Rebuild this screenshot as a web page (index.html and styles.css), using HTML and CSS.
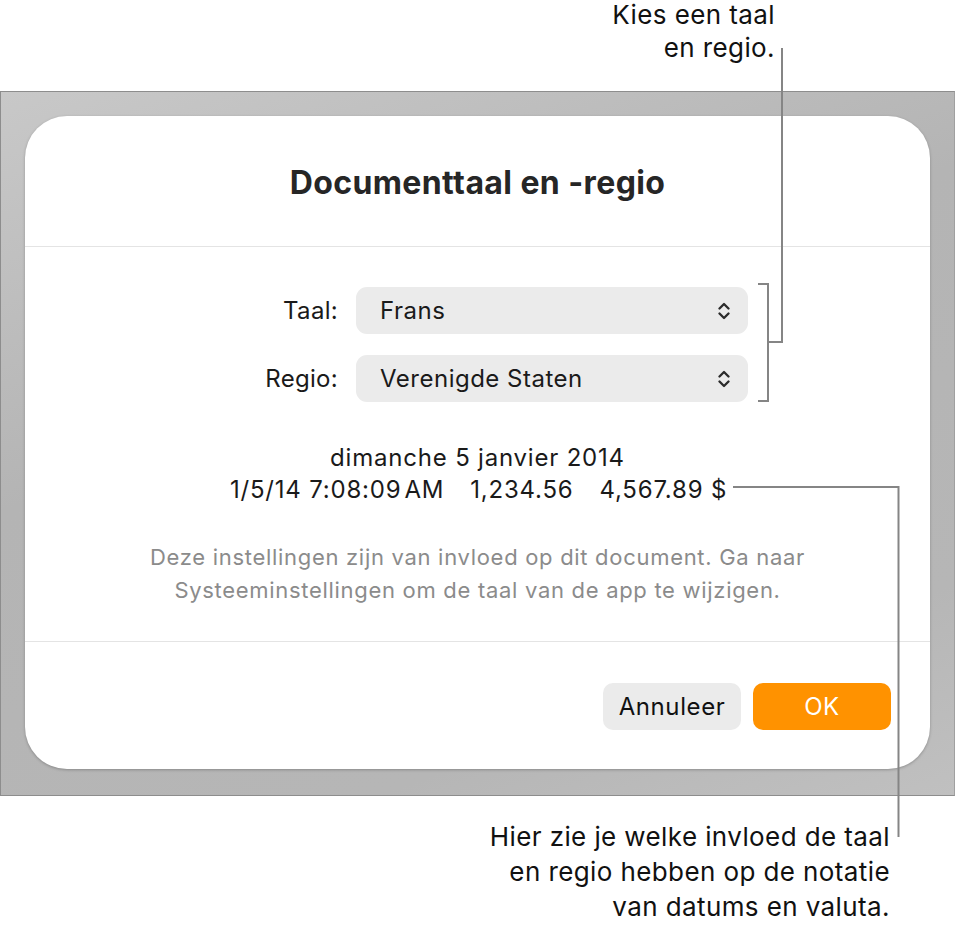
FILE: index.html
```html
<!DOCTYPE html>
<html lang="nl">

<head>
    <meta charset="UTF-8">
    <meta name="viewport" content="width=device-width, initial-scale=1.0">
    <title>Documenttaal en -regio</title>
    <link rel="stylesheet" href="styles.css">
</head>

<body>
    <div class="page">
        <p class="note note-top">Kies een taal<br>en regio.</p>

        <div class="backdrop">
            <div class="dialog">
                <div class="dialog-head">
                    <h1>Documenttaal en -regio</h1>
                </div>

                <div class="dialog-body">
                    <div class="fields">
                        <label class="field-label">Taal:</label>
                        <div class="popup">
                            <span>Frans</span>
                            <svg class="chev" viewBox="0 0 12 20" width="12" height="20">
                                <path d="M1.5 7.5 L6 3 L10.5 7.5 M1.5 12.5 L6 17 L10.5 12.5" />
                            </svg>
                        </div>
                        <label class="field-label">Regio:</label>
                        <div class="popup">
                            <span>Verenigde Staten</span>
                            <svg class="chev" viewBox="0 0 12 20" width="12" height="20">
                                <path d="M1.5 7.5 L6 3 L10.5 7.5 M1.5 12.5 L6 17 L10.5 12.5" />
                            </svg>
                        </div>
                    </div>

                    <div class="sample">
                        <div>dimanche 5 janvier 2014</div>
                        <div class="sample-row">
                            <span>1/5/14 7:08:09&#8202;AM</span>
                            <span>1,234.56</span>
                            <span>4,567.89 $</span>
                        </div>
                    </div>

                    <p class="hint">Deze instellingen zijn van invloed op dit document. Ga naar<br>Systeeminstellingen om de taal van de app te wijzigen.</p>
                </div>

                <div class="dialog-foot">
                    <button class="btn">Annuleer</button>
                    <button class="btn btn-ok">OK</button>
                </div>
            </div>
        </div>

        <p class="note note-bottom">Hier zie je welke invloed de taal<br>en regio hebben op de notatie<br>van datums en valuta.</p>

        <!-- leader lines for the callouts -->
        <svg class="leaders" width="955" height="928" viewBox="0 0 955 928">
            <path d="M758 286 H768 V403 H758 M768 344 H782 V50" />
            <path d="M733 489 H898.5 V839" />
        </svg>
    </div>
</body>

</html>
```

FILE: styles.css
```css
* {
    padding: 0;
    margin: 0;
    box-sizing: border-box;
}

body {
    background: #fff;
    font-family: Inter, "Noto Sans", "Liberation Sans", sans-serif;
    color: #1d1d1f;
}

.page {
    position: relative;
    width: 955px;
    height: 928px;
}

.note {
    font-size: 26px;
    line-height: 33px;
    letter-spacing: 0.4px;
    text-align: right;
    color: #111;
}

.note-top {
    height: 93px;
    margin-top: -2px;
    padding-right: 180px;
}

.note-bottom {
    margin-top: 23px;
    line-height: 35px;
    padding-right: 65px;
}

.backdrop {
    width: 955px;
    height: 705px;
    padding: 24px;
    border: 1px solid #8d8d8d;
    border-right-color: #a0a0a0;
    background: linear-gradient(160deg, #c8c8c8, #b4b4b4 40%, #b6b6b6 80%, #c0c0c0);
}

.dialog {
    height: 653px;
    background: #fff;
    border-radius: 42px;
    box-shadow: 0 1px 3px rgba(0, 0, 0, 0.25);
    display: flex;
    flex-direction: column;
}

.dialog-head {
    height: 131px;
    border-bottom: 1px solid #e4e4e4;
    display: flex;
    align-items: center;
    justify-content: center;
    padding-top: 3px;
}

.dialog-head h1 {
    font-size: 32px;
    font-weight: 700;
    color: #262626;
    letter-spacing: 0.4px;
}

.dialog-body {
    height: 395px;
    border-bottom: 1px solid #e4e4e4;
    padding-top: 40px;
}

.fields {
    display: grid;
    grid-template-columns: 99px 392px;
    column-gap: 18px;
    row-gap: 21px;
    align-items: center;
    padding-left: 214px;
}

.field-label {
    font-size: 24px;
    letter-spacing: 0.3px;
    text-align: right;
    color: #1a1a1a;
}

.popup {
    height: 47px;
    border-radius: 11px;
    background: #ebebeb;
    display: flex;
    align-items: center;
    justify-content: space-between;
    padding: 0 18px 0 24px;
    font-size: 24px;
    letter-spacing: 0.5px;
    color: #1a1a1a;
}

.chev {
    fill: none;
    stroke: #2b2b2b;
    stroke-width: 2.3;
    stroke-linecap: round;
    stroke-linejoin: round;
}

.sample {
    margin-top: 40px;
    font-size: 24px;
    line-height: 32px;
    letter-spacing: 0.8px;
    text-align: center;
    color: #1a1a1a;
}

.sample-row {
    display: flex;
    justify-content: center;
    gap: 26px;
    padding-left: 2px;
}

.hint {
    margin-top: 35px;
    font-size: 22px;
    line-height: 33px;
    letter-spacing: 0.7px;
    text-align: center;
    color: #8b8b8b;
}

.dialog-foot {
    flex: 1;
    display: flex;
    justify-content: flex-end;
    align-items: flex-start;
    gap: 12px;
    padding: 41px 39px 0 0;
}

.btn {
    width: 138px;
    height: 47px;
    border: none;
    border-radius: 10px;
    background: #ebebeb;
    font-family: inherit;
    font-size: 24px;
    letter-spacing: 0.6px;
    color: #111;
}

.btn-ok {
    background: #ff9200;
    color: #fff;
}

.leaders {
    position: absolute;
    top: 0;
    left: 0;
    fill: none;
    stroke: #858585;
    stroke-width: 2;
}
```
